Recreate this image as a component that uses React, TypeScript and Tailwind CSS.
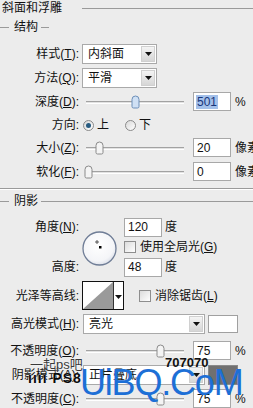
import React from "react";

const U = ({ c }: { c: string }) => <span className="underline">{c}</span>;

function Label({ children }: { children: React.ReactNode }) {
  return <div className="w-[79px] shrink-0 text-right whitespace-nowrap">{children}</div>;
}

function Arrow() {
  return (
    <svg width="7" height="4" viewBox="0 0 7 4">
      <path d="M0 0H7L3.5 4Z" fill="#111" />
    </svg>
  );
}

function Select({ text, wide }: { text: string; wide?: boolean }) {
  return (
    <div
      className={
        wide
          ? "flex shrink-0 h-[20px] w-[122px] ml-[4px] border border-[#a9a9a9] bg-white"
          : "flex shrink-0 h-[20px] w-[75px] ml-[3px] border border-[#a9a9a9] bg-white"
      }
    >
      <div className="flex-1 pl-[5px] flex items-center whitespace-nowrap">{text}</div>
      <div className="w-[14px] my-[1px] mr-[1px] flex items-center justify-center bg-gradient-to-b from-[#f4f4f4] to-[#d6d6d6] border border-[#d0d0d0]">
        <Arrow />
      </div>
    </div>
  );
}

function Slider({ pos, active }: { pos: number; active?: boolean }) {
  return (
    <div className="relative shrink-0 w-[110px] h-full ml-[4px]">
      <div className="absolute left-[3px] w-[98px] top-1/2 -mt-[1px] h-[3px] border-t border-[#a2a2a2] bg-[#e2e2e2] border-b border-b-white" />
      <svg
        className="absolute top-1/2 -mt-[7px]"
        style={{ left: pos - 83 - 4 }}
        width="9"
        height="14"
        viewBox="0 0 9 14"
      >
        <path
          d="M1 4.5Q1 1 4.5 1Q8 1 8 4.5V11.5Q8 13 6.5 13H2.5Q1 13 1 11.5Z"
          fill={active ? "#cfe0f4" : "#f4f4f4"}
          stroke={active ? "#6d8fb8" : "#8a8a8a"}
          strokeWidth="1"
        />
      </svg>
    </div>
  );
}

function Num({ v, sel }: { v: string; sel?: boolean }) {
  return (
    <div className="shrink-0 w-[38px] h-[19px] border border-[#a8a8a8] bg-white flex items-center pl-[2px]">
      {sel ? <span className="bg-[#a3c0ea] text-[#17357a] px-[1px]">{v}</span> : <span className="pl-[1px]">{v}</span>}
    </div>
  );
}

function Check({ label }: { label: React.ReactNode }) {
  return (
    <div className="flex items-center whitespace-nowrap">
      <div className="w-[12px] h-[12px] border border-[#8e8e8e] bg-gradient-to-br from-[#dcdcdc] to-white" />
      <span className="ml-[4px]">{label}</span>
    </div>
  );
}

function Radio({ on }: { on?: boolean }) {
  return (
    <div className="w-[11px] h-[11px] rounded-full border border-[#8a8a8a] bg-gradient-to-br from-[#d8d8d8] to-white flex items-center justify-center">
      {on && <div className="w-[5px] h-[5px] rounded-full bg-[#275b80]" />}
    </div>
  );
}

export default function App() {
  return (
    <div className="relative w-[253px] h-[408px] overflow-hidden bg-[#ececec] text-[12px] leading-[14px] text-[#111] font-['Liberation_Sans','Noto_Sans_CJK_SC',sans-serif]">
      {/* header */}
      <div className="flex items-center h-[16px]">
        <span className="pl-[2px] whitespace-nowrap">斜面和浮雕</span>
        <div className="flex-1 ml-[20px] h-px bg-[#9a9a9a]" />
      </div>
      <div className="flex items-center h-[14px] mt-[4px]">
        <div className="w-[9px] h-px bg-[#9a9a9a]" />
        <span className="ml-[5px]">结构</span>
        <div className="ml-[3px] w-[8px] h-px bg-[#9a9a9a]" />
      </div>

      <div className="flex items-center h-[20px] mt-[10px]">
        <Label>样式(<U c="T" />):</Label>
        <Select text="内斜面" />
      </div>
      <div className="flex items-center h-[20px] mt-[4px]">
        <Label>方法(<U c="Q" />):</Label>
        <Select text="平滑" />
      </div>
      <div className="flex items-center h-[19px] mt-[4px]">
        <Label>深度(<U c="D" />):</Label>
        <Slider pos={135} active />
        <Num v="501" sel />
        <span className="ml-[4px]">%</span>
      </div>
      <div className="flex items-center h-[20px] mt-[4px]">
        <Label>方向:</Label>
        <div className="ml-[4px]"><Radio on /></div>
        <span className="ml-[3px]">上</span>
        <div className="ml-[16px]"><Radio /></div>
        <span className="ml-[3px]">下</span>
      </div>
      <div className="flex items-center h-[19px] mt-[3px]">
        <Label>大小(<U c="Z" />):</Label>
        <Slider pos={99} />
        <Num v="20" />
        <span className="ml-[4px] whitespace-nowrap shrink-0">像素</span>
      </div>
      <div className="flex items-center h-[19px] mt-[5px]">
        <Label>软化(<U c="F" />):</Label>
        <Slider pos={88} />
        <Num v="0" />
        <span className="ml-[4px] whitespace-nowrap shrink-0">像素</span>
      </div>

      <div className="mt-[7px] h-[2px] border-t border-[#9a9a9a] border-b border-b-white" />

      <div className="flex items-center h-[14px] mt-[4px]">
        <div className="w-[9px] h-px bg-[#9a9a9a]" />
        <span className="ml-[5px] px-[0px]">阴影</span>
        <div className="flex-1 ml-[3px] h-px bg-[#9a9a9a]" />
      </div>

      {/* angle block */}
      <div className="flex mt-[10px]">
        <div className="flex flex-col w-[79px] shrink-0">
          <div className="h-[18px] flex items-center justify-end">角度(<U c="N" />):</div>
          <div className="h-[18px] mt-[22px] flex items-center justify-end">高度:</div>
        </div>
        <div className="ml-[3px] mt-[13px] w-[35px] h-[35px] shrink-0">
          <svg width="35" height="35" viewBox="0 0 35 35">
            <defs>
              <radialGradient id="g" cx="0.45" cy="0.4" r="0.6">
                <stop offset="0" stopColor="#ffffff" />
                <stop offset="0.8" stopColor="#f4f5f8" />
                <stop offset="1" stopColor="#dde1ea" />
              </radialGradient>
            </defs>
            <circle cx="17.5" cy="17.5" r="16.5" fill="url(#g)" stroke="#6f7d96" strokeWidth="1.3" />
            <path d="M15 9V13M13 11H17" stroke="#333" strokeWidth="0.8" />
            <rect x="17" y="15" width="2.5" height="2.5" fill="#000" />
          </svg>
        </div>
        <div className="ml-[7px] flex flex-col">
          <div className="flex items-center h-[18px]">
            <Num v="120" />
            <span className="ml-[3px]">度</span>
          </div>
          <div className="mt-[5px] h-[12px] flex items-center">
            <Check label={<>使用全局光(<U c="G" />)</>} />
          </div>
          <div className="flex items-center h-[18px] mt-[5px]">
            <Num v="48" />
            <span className="ml-[3px]">度</span>
          </div>
        </div>
      </div>

      {/* contour */}
      <div className="flex items-center h-[29px] mt-[5px]">
        <Label>光泽等高线:</Label>
        <div className="ml-[3px] w-[42px] h-[29px] shrink-0 border border-[#111] bg-white flex">
          <svg width="30" height="27" viewBox="0 0 30 27">
            <path d="M0 27L30 0V27Z" fill="#9a9a9a" />
          </svg>
          <div className="w-px bg-[#333]" />
          <div className="flex-1 flex items-center justify-center pt-[2px]">
            <Arrow />
          </div>
        </div>
        <div className="ml-[15px]">
          <Check label={<>消除锯齿(<U c="L" />)</>} />
        </div>
      </div>

      <div className="flex items-center h-[20px] mt-[4px]">
        <Label>高光模式(<U c="H" />):</Label>
        <Select text="亮光" wide />
        <div className="ml-[3px] w-[30px] h-[18px] shrink-0 border border-[#a0a0a0] bg-white" />
      </div>
      <div className="flex items-center h-[19px] mt-[7px]">
        <Label>不透明度(<U c="O" />):</Label>
        <Slider pos={160} />
        <Num v="75" />
        <span className="ml-[4px]">%</span>
      </div>
      <div className="flex items-center h-[20px] mt-[5px]">
        <Label>阴影模式(<U c="A" />):</Label>
        <Select text="正片叠底" wide />
        <div className="ml-[3px] w-[30px] h-[20px] shrink-0 border border-[#8a8a8a] bg-[#707070]" />
      </div>
      <div className="flex items-center h-[19px] mt-[4px]">
        <Label>不透明度(<U c="C" />):</Label>
        <Slider pos={160} />
        <Num v="75" />
        <span className="ml-[4px]">%</span>
      </div>

      {/* watermarks */}
      <div className="absolute left-[30px] top-[357px] text-[13px] leading-[15px] text-[#3a3a3a] whitespace-nowrap [text-shadow:0_0_2px_#ffffff]">
        一起ps吧
      </div>
      <div className="absolute left-[28px] top-[371px] text-[14px] leading-[14px] font-black text-[#0a0a0a] tracking-[1px] whitespace-nowrap [text-shadow:0_0_1px_#ffffff]">
        ıııı PS8
      </div>
      <div className="absolute left-[165px] top-[356px] text-[13px] leading-[14px] font-bold text-[#111] whitespace-nowrap">
        707070
      </div>
      <div className="absolute left-[80px] top-[365px] [font-size:36px] [line-height:36px] [letter-spacing:-1.2px] text-[#1d6fd6] whitespace-nowrap">
        UiBQ.CoM
      </div>
    </div>
  );
}
